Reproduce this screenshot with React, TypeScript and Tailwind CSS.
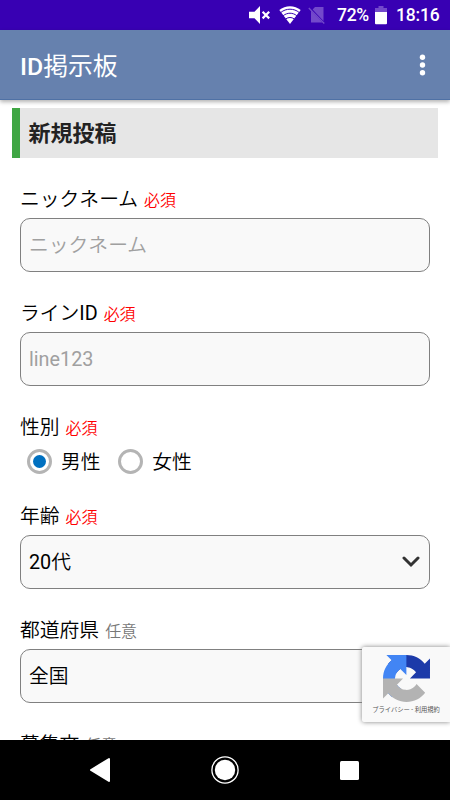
import type { ReactNode } from "react";

function StatusBar() {
  return (
    <div className="h-[30px] shrink-0 bg-[#3800b3] text-white flex items-center justify-end pr-[10px]">
      <svg className="w-[22px] h-[30px]" viewBox="0 0 22 30" fill="none">
        <path d="M0 11.7h5.5L11 6v18l-5.5-5.7H0z" fill="#fff" />
        <path d="M13.6 11.8l6.6 6.6M20.2 11.8l-6.6 6.6" stroke="#fff" strokeWidth="2.2" />
      </svg>
      <svg className="w-[22px] h-[30px] ml-[8px]" viewBox="0 0 22 30" fill="none">
        <path d="M.3 10.1C6.2 4.9 15.8 4.9 21.7 10.1L11 24z" fill="#fff" />
        <path
          d="M1.8 12.5C7 8.1 15 8.1 20.2 12.5M4.2 15.7c4-3.3 9.6-3.3 13.6 0M6.8 18.9c2.6-1.9 5.8-1.9 8.4 0"
          stroke="#3800b3"
          strokeWidth="1"
        />
      </svg>
      <svg className="w-[18px] h-[30px] ml-[7px]" viewBox="0 0 18 30" fill="none">
        <path d="M7 7h8.5v14L4.6 9.6zM3 10.4L14.4 22.5H3z" fill="#7349cb" />
        <path d="M.8 8l15.5 15.5" stroke="#7349cb" strokeWidth="1.3" />
      </svg>
      <span className="w-[33px] ml-[11px] pt-px text-[17.5px] font-medium tracking-[-0.3px] whitespace-nowrap">72%</span>
      <svg className="w-[12px] h-[30px] ml-[5px]" viewBox="0 0 12 30">
        <path d="M3.5 6h5v2H12v4H0V8h3.5z" fill="#7349cb" />
        <path d="M0 12h12v11.2q0 1-1 1H1q-1 0-1-1z" fill="#fff" />
      </svg>
      <span className="w-[44px] ml-[9px] pt-px text-[17.5px] font-medium tracking-[-0.2px] whitespace-nowrap">18:16</span>
    </div>
  );
}

function Header() {
  return (
    <header className="relative z-10 h-[70px] shrink-0 bg-[#6681ae] border-b border-[#4f71a5] shadow-[0_2px_4px_rgba(0,0,0,0.3)] flex items-center justify-between pl-5 pr-[24px]">
      <h1 className="pt-[5px] text-white text-[24.8px] leading-[36px]">
        <span className="font-medium">ID</span>掲示板
      </h1>
      <svg className="w-[7px] h-[22px]" viewBox="0 0 7 22" fill="#fff">
        <circle cx="3.5" cy="3.3" r="2.7" />
        <circle cx="3.5" cy="11" r="2.7" />
        <circle cx="3.5" cy="18.7" r="2.7" />
      </svg>
    </header>
  );
}

function Label({ children, required }: { children: ReactNode; required?: boolean }) {
  return (
    <div className="h-[36px] pt-[2.5px] text-[19.8px] leading-[32px] whitespace-nowrap">
      {children}
      {required ? (
        <span className="ml-[6px] text-[15.9px] text-[#ff0000]">必須</span>
      ) : (
        <span className="ml-[6px] text-[15.9px] text-[#777777]">任意</span>
      )}
    </div>
  );
}

function Box({ children }: { children: ReactNode }) {
  return (
    <div className="h-[54.5px] pt-[2px] rounded-[10px] border border-[#808080] bg-[#f9f9f9] pl-2 pr-[9px] flex items-center justify-between text-[19.8px]">
      {children}
    </div>
  );
}

function Chevron() {
  return (
    <svg className="w-[18px] h-[12px] -mt-[3px]" viewBox="0 0 18 12" fill="none">
      <path d="M2 2l7 7 7-7" stroke="#333" strokeWidth="3" strokeLinecap="round" />
    </svg>
  );
}

function Radio({ label, checked }: { label: string; checked?: boolean }) {
  return (
    <div className="flex items-center gap-[9px] text-[19.8px]">
      <span className="w-[25px] h-[25px] rounded-full border-[3px] border-[#b4b4b4] bg-white flex items-center justify-center">
        {checked && <span className="w-[13px] h-[13px] rounded-full bg-[#0070c0]" />}
      </span>
      <span className="pt-[2px]">{label}</span>
    </div>
  );
}

function Recaptcha() {
  return (
    <div className="absolute right-0 top-[547px] w-[88px] h-[75px] rounded-l-[2px] bg-[#f9f9f9] shadow-[0_0_5px_#808080] flex flex-col items-center pt-[8px]">
      <svg className="w-[47px] h-[47px]" viewBox="0 0 64 64">
        <path
          fill="#1c3aa9"
          d="M64 31.955l-.033-1.37V4.687l-7.16 7.16C50.948 4.674 42.033.093 32.05.093c-10.4 0-19.622 4.96-25.458 12.64l11.736 11.86a15.55 15.55 0 0 1 4.754-5.334c2.05-1.6 4.952-2.906 8.968-2.906.485 0 .86.057 1.135.163 4.976.393 9.288 3.14 11.828 7.124l-8.307 8.307L64 31.953"
        />
        <path
          fill="#4285f4"
          d="M31.862.094l-1.37.033H4.594l7.16 7.16C4.58 13.147 0 22.06 0 32.046c0 10.4 4.96 19.622 12.64 25.458L24.5 45.768a15.55 15.55 0 0 1-5.334-4.754c-1.6-2.05-2.906-4.952-2.906-8.968 0-.485.057-.86.163-1.135.393-4.976 3.14-9.288 7.124-11.828l8.307 8.307L31.86.095"
        />
        <path
          fill="#b3b3b3"
          d="M.001 32.045l.033 1.37v25.898l7.16-7.16c5.86 7.173 14.774 11.754 24.76 11.754 10.4 0 19.622-4.96 25.458-12.64l-11.736-11.86a15.55 15.55 0 0 1-4.754 5.334c-2.05 1.6-4.952 2.906-8.968 2.906-.485 0-.86-.057-1.135-.163-4.976-.393-9.288-3.14-11.828-7.124l8.307-8.307L0 32.047"
        />
      </svg>
      <p className="pt-[2px] text-[6.3px] leading-[13px] text-[#555] whitespace-nowrap">プライバシー - 利用規約</p>
    </div>
  );
}

function NavBar() {
  return (
    <div className="h-[60px] shrink-0 bg-black flex items-center">
      <svg className="w-[22px] h-[26px] ml-[89px]" viewBox="0 0 22 26">
        <path d="M20 2v22L2 13z" fill="#fff" stroke="#fff" strokeWidth="2" strokeLinejoin="round" />
      </svg>
      <svg className="w-[28px] h-[28px] ml-[100px]" viewBox="0 0 28 28">
        <circle cx="14" cy="14" r="13.1" fill="none" stroke="#fff" strokeWidth="1.3" />
        <circle cx="14" cy="14" r="10.2" fill="#fff" />
      </svg>
      <div className="w-[19px] h-[19px] ml-[101px] rounded-[1.5px] bg-white" />
    </div>
  );
}

export default function App() {
  return (
    <div className="w-[450px] h-[800px] overflow-hidden flex flex-col bg-white text-black font-[Roboto,'Noto_Sans_CJK_JP',sans-serif]">
      <StatusBar />
      <Header />
      <main className="relative flex-1 min-h-0 overflow-hidden">
        <h2 className="mt-[8.4px] ml-[12.4px] mr-[12px] h-[50px] border-l-[8px] border-[#3fa644] bg-[#e6e6e6] pl-[8px] text-[22px] leading-[51px] font-bold text-[#222]">
          新規投稿
        </h2>
        <form className="px-5 pt-[23.6px] font-[350]">
          <div className="h-[114px]">
            <Label required>ニックネーム</Label>
            <Box>
              <span className="text-[#a0a0a0]">ニックネーム</span>
            </Box>
          </div>
          <div className="h-[114px]">
            <Label required>
              ライン<span className="font-normal">ID</span>
            </Label>
            <Box>
              <span className="font-normal text-[#a0a0a0]">line123</span>
            </Box>
          </div>
          <div className="h-[89px]">
            <Label required>性別</Label>
            <div className="flex gap-[17.6px] pl-[7px]">
              <Radio label="男性" checked />
              <Radio label="女性" />
            </div>
          </div>
          <div className="h-[114px]">
            <Label required>年齢</Label>
            <Box>
              <span>
                <span className="font-normal">20</span>代
              </span>
              <Chevron />
            </Box>
          </div>
          <div className="h-[114px]">
            <Label>都道府県</Label>
            <Box>
              全国
              <Chevron />
            </Box>
          </div>
          <Label>募集文</Label>
        </form>
        <Recaptcha />
      </main>
      <NavBar />
    </div>
  );
}
